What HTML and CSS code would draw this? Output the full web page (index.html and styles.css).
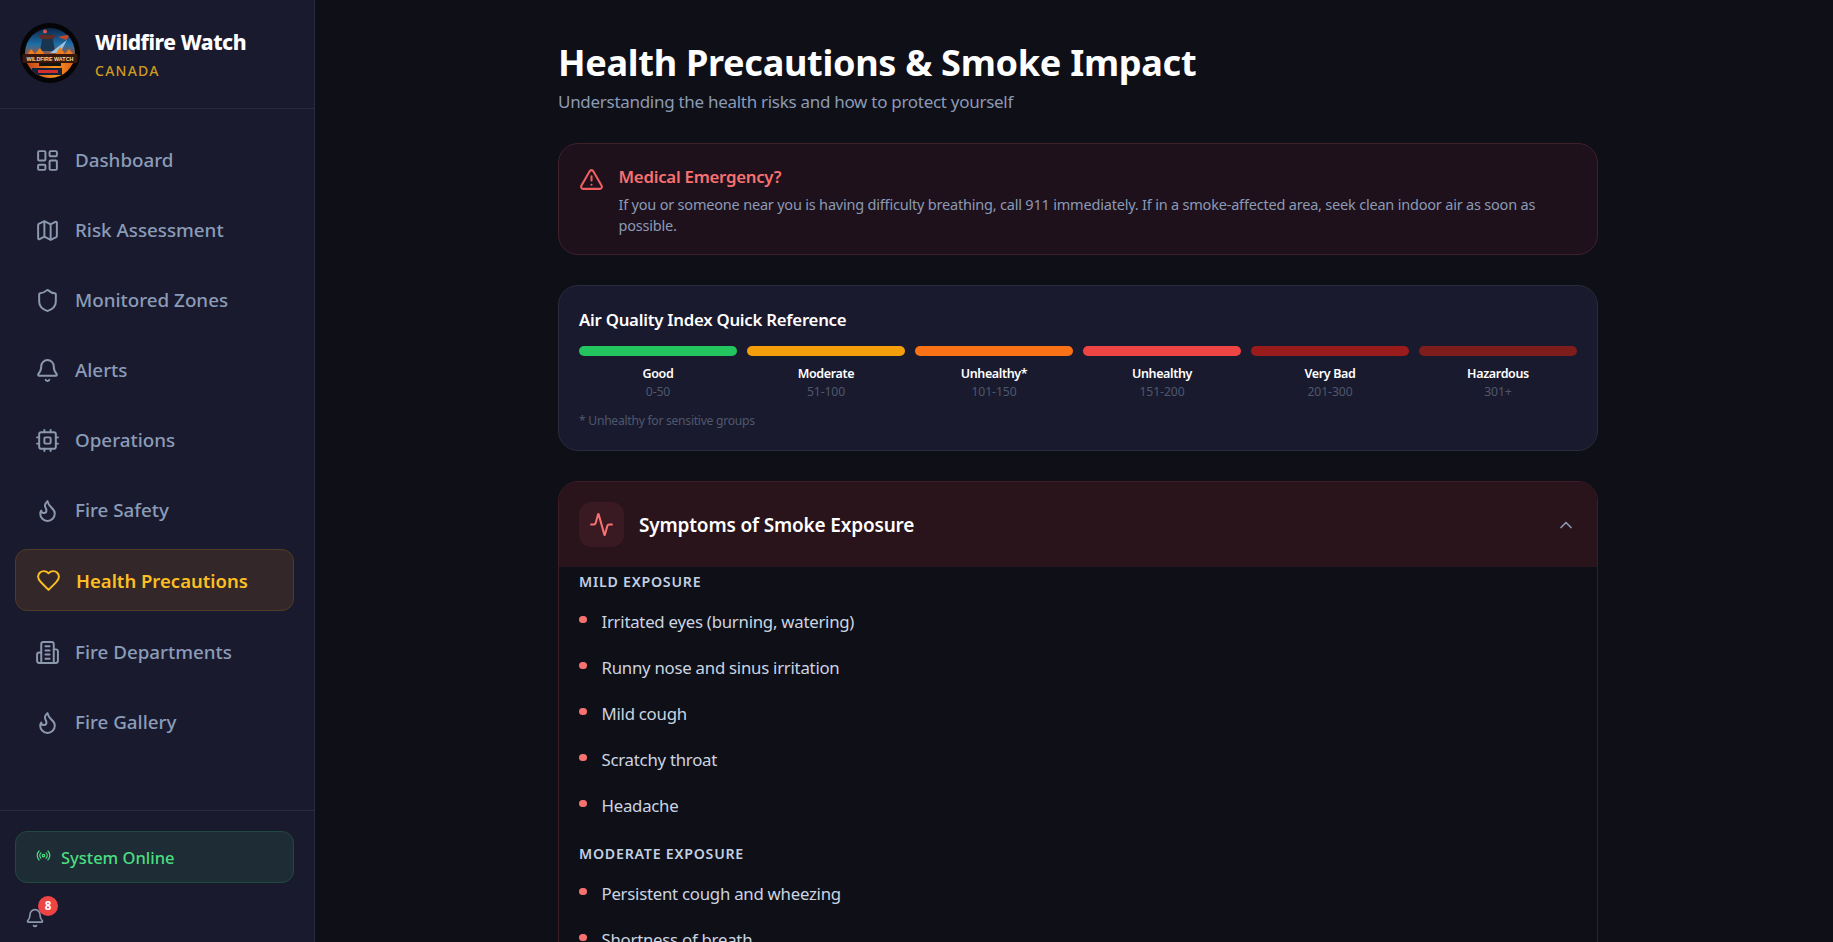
FILE: index.html
```html
<!DOCTYPE html>
<html lang="en">
<head>
<meta charset="utf-8">
<title>Wildfire Watch</title>
<link rel="stylesheet" href="styles.css">
</head>
<body>
<svg class="defs" width="0" height="0">
  <symbol id="i-flame" viewBox="0 0 24 24"><path d="M8.5 14.5A2.5 2.5 0 0 0 11 12c0-1.38-.5-2-1-3-1.072-2.143-.224-4.054 2-6 .5 2.5 2 4.9 4 6.5 2 1.6 3 3.5 3 5.5a7 7 0 1 1-14 0c0-1.153.433-2.294 1-3a2.5 2.5 0 0 0 2.5 2.5z"/></symbol>
  <symbol id="i-bell" viewBox="0 0 24 24"><path d="M10.268 21a2 2 0 0 0 3.464 0"/><path d="M3.262 15.326A1 1 0 0 0 4 17h16a1 1 0 0 0 .74-1.673C19.41 13.956 18 12.499 18 8A6 6 0 0 0 6 8c0 4.499-1.411 5.956-2.738 7.326"/></symbol>
</svg>
<div class="app">
  <aside class="sidebar">
    <div class="brand">
      <svg class="logo" viewBox="0 0 60 60">
        <defs>
          <linearGradient id="sky" x1="0" y1="0" x2="0" y2="1"><stop offset="0" stop-color="#0c2547"/><stop offset=".55" stop-color="#1f6ea8"/><stop offset="1" stop-color="#c9501c"/></linearGradient>
          <linearGradient id="fire" x1="0" y1="0" x2="1" y2="0"><stop offset="0" stop-color="#b8301a"/><stop offset=".6" stop-color="#f7941e"/><stop offset="1" stop-color="#d8481a"/></linearGradient>
          <clipPath id="disc"><circle cx="30" cy="30" r="25"/></clipPath>
        </defs>
        <circle cx="30" cy="30" r="30" fill="#050508"/>
        <g clip-path="url(#disc)">
          <rect x="0" y="5" width="60" height="30" fill="url(#sky)"/>
          <path d="M20 28l3-17h9l3 17z" fill="#1a3550"/>
          <path d="M18 12h18l-3 4H21z" fill="#5d2c26"/>
          <path d="M38 14l13-3-5 6z" fill="#c2482a"/>
          <path d="M30 30l17-13-7 13z" fill="#9cc3df"/>
          <path d="M6 34l5-8 4 5 5-6 5 7h10l5-8 5 7 4-5 6 8v8H6z" fill="#ef7d1c"/>
          <rect x="0" y="38" width="60" height="20" fill="url(#fire)"/>
          <rect x="12" y="45" width="30" height="7" fill="#12213c"/>
          <rect x="18" y="47" width="20" height="3" fill="#d12f2f"/>
        </g>
        <circle cx="25" cy="8.5" r="2" fill="#d9574a"/>
        <rect x="2.5" y="31" width="55" height="9" rx="1" fill="#3a170c"/>
        <text class="logo-text" x="30" y="37.8" text-anchor="middle">WILDFIRE WATCH</text>
        <rect x="19" y="40" width="22" height="3" fill="#14140c"/>
      </svg>
      <div class="brand-text">
        <div class="brand-name">Wildfire Watch</div>
        <div class="brand-sub">CANADA</div>
      </div>
    </div>
    <nav class="nav">
      <a class="nav-item"><svg class="icon" viewBox="0 0 24 24"><rect x="3" y="3" width="7" height="9" rx="1"/><rect x="14" y="3" width="7" height="5" rx="1"/><rect x="14" y="12" width="7" height="9" rx="1"/><rect x="3" y="16" width="7" height="5" rx="1"/></svg><span>Dashboard</span></a>
      <a class="nav-item"><svg class="icon" viewBox="0 0 24 24"><path d="M14.106 5.553a2 2 0 0 0 1.788 0l3.659-1.83A1 1 0 0 1 21 4.619v12.764a1 1 0 0 1-.553.894l-4.553 2.277a2 2 0 0 1-1.788 0l-4.212-2.106a2 2 0 0 0-1.788 0l-3.659 1.83A1 1 0 0 1 3 19.381V6.618a1 1 0 0 1 .553-.894l4.553-2.277a2 2 0 0 1 1.788 0z"/><path d="M15 5.764v15"/><path d="M9 3.236v15"/></svg><span>Risk Assessment</span></a>
      <a class="nav-item"><svg class="icon" viewBox="0 0 24 24"><path d="M20 13c0 5-3.5 7.5-7.66 8.95a1 1 0 0 1-.67-.01C7.5 20.5 4 18 4 13V6a1 1 0 0 1 1-1c2 0 4.5-1.2 6.24-2.72a1.17 1.17 0 0 1 1.52 0C14.51 3.81 17 5 19 5a1 1 0 0 1 1 1z"/></svg><span>Monitored Zones</span></a>
      <a class="nav-item"><svg class="icon"><use href="#i-bell"/></svg><span>Alerts</span></a>
      <a class="nav-item"><svg class="icon" viewBox="0 0 24 24"><rect x="4" y="4" width="16" height="16" rx="2"/><rect x="9" y="9" width="6" height="6" rx="1"/><path d="M15 2v2M15 20v2M2 15h2M2 9h2M20 15h2M20 9h2M9 2v2M9 20v2"/></svg><span>Operations</span></a>
      <a class="nav-item"><svg class="icon"><use href="#i-flame"/></svg><span>Fire Safety</span></a>
      <a class="nav-item active"><svg class="icon" viewBox="0 0 24 24"><path d="M19 14c1.49-1.46 3-3.21 3-5.5A5.5 5.5 0 0 0 16.5 3c-1.76 0-3 .5-4.5 2-1.5-1.5-2.74-2-4.5-2A5.5 5.5 0 0 0 2 8.5c0 2.3 1.5 4.05 3 5.5l7 7Z"/></svg><span>Health Precautions</span></a>
      <a class="nav-item"><svg class="icon" viewBox="0 0 24 24"><path d="M6 22V4a2 2 0 0 1 2-2h8a2 2 0 0 1 2 2v18Z"/><path d="M6 12H4a2 2 0 0 0-2 2v6a2 2 0 0 0 2 2h2"/><path d="M18 9h2a2 2 0 0 1 2 2v9a2 2 0 0 1-2 2h-2"/><path d="M10 6h4M10 10h4M10 14h4M10 18h4"/></svg><span>Fire Departments</span></a>
      <a class="nav-item"><svg class="icon"><use href="#i-flame"/></svg><span>Fire Gallery</span></a>
    </nav>
    <div class="side-foot">
      <div class="status"><svg class="icon-status" viewBox="0 0 24 24"><path d="M4.9 19.1C1 15.2 1 8.8 4.9 4.9"/><path d="M7.8 16.2c-2.3-2.3-2.3-6.1 0-8.5"/><circle cx="12" cy="12" r="2"/><path d="M16.2 7.8c2.3 2.3 2.3 6.1 0 8.5"/><path d="M19.1 4.9C23 8.8 23 15.1 19.1 19"/></svg><span>System Online</span></div>
      <div class="bell-wrap">
        <svg class="icon-bell"><use href="#i-bell"/></svg>
        <span class="badge">8</span>
      </div>
    </div>
  </aside>
  <main class="main">
    <div class="content">
      <h1 class="title">Health Precautions &amp; Smoke Impact</h1>
      <p class="subtitle">Understanding the health risks and how to protect yourself</p>

      <section class="emergency">
        <svg class="icon-alert" viewBox="0 0 24 24"><path d="m21.73 18-8-14a2 2 0 0 0-3.48 0l-8 14A2 2 0 0 0 4 21h16a2 2 0 0 0 1.73-3"/><path d="M12 9v4"/><path d="M12 17h.01"/></svg>
        <div>
          <h2 class="emergency-title">Medical Emergency?</h2>
          <p class="emergency-text">If you or someone near you is having difficulty breathing, call 911 immediately. If in a smoke-affected area, seek clean indoor air as soon as possible.</p>
        </div>
      </section>

      <section class="aqi">
        <h3 class="aqi-title">Air Quality Index Quick Reference</h3>
        <div class="aqi-grid">
          <div class="aqi-col"><div class="bar c1"></div><div class="aqi-name">Good</div><div class="aqi-range">0-50</div></div>
          <div class="aqi-col"><div class="bar c2"></div><div class="aqi-name">Moderate</div><div class="aqi-range">51-100</div></div>
          <div class="aqi-col"><div class="bar c3"></div><div class="aqi-name">Unhealthy*</div><div class="aqi-range">101-150</div></div>
          <div class="aqi-col"><div class="bar c4"></div><div class="aqi-name">Unhealthy</div><div class="aqi-range">151-200</div></div>
          <div class="aqi-col"><div class="bar c5"></div><div class="aqi-name">Very Bad</div><div class="aqi-range">201-300</div></div>
          <div class="aqi-col"><div class="bar c6"></div><div class="aqi-name">Hazardous</div><div class="aqi-range">301+</div></div>
        </div>
        <p class="aqi-note">* Unhealthy for sensitive groups</p>
      </section>

      <section class="panel">
        <header class="panel-head">
          <div class="panel-icon"><svg viewBox="0 0 24 24"><path d="M22 12h-2.48a2 2 0 0 0-1.93 1.46l-2.35 8.36a.25.25 0 0 1-.48 0L9.24 2.18a.25.25 0 0 0-.48 0l-2.35 8.36A2 2 0 0 1 4.49 12H2"/></svg></div>
          <h2 class="panel-title">Symptoms of Smoke Exposure</h2>
          <svg class="chev" viewBox="0 0 24 24"><path d="m18 15-6-6-6 6"/></svg>
        </header>
        <div class="panel-body">
          <h4 class="group">MILD EXPOSURE</h4>
          <ul class="list">
            <li>Irritated eyes (burning, watering)</li>
            <li>Runny nose and sinus irritation</li>
            <li>Mild cough</li>
            <li>Scratchy throat</li>
            <li>Headache</li>
          </ul>
          <h4 class="group">MODERATE EXPOSURE</h4>
          <ul class="list">
            <li>Persistent cough and wheezing</li>
            <li>Shortness of breath</li>
          </ul>
        </div>
      </section>
    </div>
  </main>
</div>
</body>
</html>
```
FILE: styles.css
```css
* { box-sizing: border-box; }
html, body { height: 100%; margin: 0; }
body {
  background: #0f0f17;
  color: #fff;
  font-family: "Noto Sans", "Open Sans", sans-serif;
  overflow: hidden;
}
h1, h2, h3, h4, p, ul { margin: 0; padding: 0; }
.defs { position: absolute; }
symbol { overflow: visible; }
svg { fill: none; stroke-linecap: round; stroke-linejoin: round; }
.app { display: flex; height: 942px; }

/* sidebar */
.sidebar {
  width: 315px;
  flex: none;
  display: flex;
  flex-direction: column;
  background: #1a1a2e;
  border-right: 1px solid #2a2a3c;
}
.brand {
  height: 109px;
  display: flex;
  align-items: center;
  gap: 15px;
  padding: 0 20px;
  border-bottom: 1px solid #2a2a3e;
}
.logo { width: 60px; height: 60px; flex: none; margin-bottom: 2px; }
.logo-text { font-size: 5.4px; font-weight: 800; fill: #f6dcae; font-family: "Liberation Sans", sans-serif; }
.brand-name { font-size: 21px; font-weight: 800; line-height: 28px; letter-spacing: -.45px; }
.brand-sub { font-size: 14px; font-weight: 500; line-height: 20px; color: #cf9a20; letter-spacing: 1.25px; margin-top: 5px; }
.nav { flex: 1; display: flex; flex-direction: column; gap: 10px; padding: 21px 20px 0 15px; }
.nav-item {
  height: 60px;
  display: flex;
  align-items: center;
  gap: 15px;
  padding: 0 20px;
  color: #8a9cb8;
  font-size: 18.8px;
  font-weight: 500;
  border-radius: 12px;
}
.icon { width: 25px; height: 25px; flex: none; stroke: #8b98ae; stroke-width: 1.9; }
.nav-item.active {
  height: 62px;
  margin: -1px 0 1px;
  padding: 1px 20px 0;
  color: #fbbf24;
  background: #332729;
  border: 1px solid #4f3c22;
  font-size: 18.5px;
  font-weight: 600;
}
.nav-item.active .icon { stroke: #fbbf24; }
.side-foot { height: 132px; padding: 20px 20px 0 15px; border-top: 1px solid #2a2a3e; }
.status {
  height: 52px;
  display: flex;
  align-items: center;
  gap: 10px;
  padding: 0 20px;
  color: #4ade80;
  font-size: 16.5px;
  font-weight: 500;
  background: #1e2c36;
  border: 1px solid #1f4a3f;
  border-radius: 12px;
}
.icon-status { width: 15px; height: 15px; stroke: #4ade80; stroke-width: 2; margin-bottom: 4px; }
.bell-wrap { position: relative; width: 40px; height: 40px; margin: 13px 0 0 5px; }
.icon-bell { width: 20px; height: 20px; stroke: #8b98ae; stroke-width: 2; position: absolute; left: 5px; top: 12px; }
.badge {
  position: absolute;
  left: 18px;
  top: 0;
  width: 20px;
  height: 20px;
  border-radius: 50%;
  background: #ef4444;
  color: #fff;
  font-size: 11.5px;
  font-weight: 700;
  line-height: 20px;
  text-align: center;
}

/* main */
.main { flex: 1; overflow: hidden; }
.content { width: 1040px; margin-left: 243px; padding-top: 37px; }
.title { font-size: 36.1px; font-weight: 700; line-height: 50px; letter-spacing: -.3px; }
.subtitle { font-size: 17px; line-height: 28px; color: #8b9ab5; margin-top: 1px; letter-spacing: -.29px; }

.emergency {
  height: 112px;
  margin-top: 27px;
  display: flex;
  gap: 14.5px;
  padding: 19px 20px 0;
  background: #1e111c;
  border: 1px solid #41202c;
  border-radius: 20px;
}
.icon-alert { width: 25px; height: 25px; flex: none; stroke: #f05f5f; stroke-width: 2; margin-top: 4px; }
.emergency-title { font-size: 16.8px; font-weight: 600; line-height: 28px; color: #f87171; letter-spacing: -.25px; }
.emergency-text { font-size: 14.5px; line-height: 21px; color: #8b9ab5; margin-top: 3px; letter-spacing: -.2px; }

.aqi {
  height: 166px;
  margin-top: 30px;
  padding: 20px;
  background: #1a1a2e;
  border: 1px solid #2a2a3e;
  border-radius: 20px;
}
.aqi-title { font-size: 16.8px; font-weight: 600; line-height: 28px; letter-spacing: -.25px; }
.aqi-grid { display: grid; grid-template-columns: repeat(6, 1fr); gap: 10px; margin-top: 12px; }
.aqi-col { text-align: center; }
.bar { height: 10px; border-radius: 5px; }
.c1 { background: #22c55e; }
.c2 { background: #f59e0b; }
.c3 { background: #f97316; }
.c4 { background: #ef4444; }
.c5 { background: #991b1b; }
.c6 { background: #7f1d1d; }
.aqi-name { font-size: 12.5px; font-weight: 600; line-height: 19px; margin-top: 8px; letter-spacing: -.35px; }
.aqi-range { font-size: 12.2px; line-height: 18px; color: #4d586d; letter-spacing: -.1px; }
.aqi-note { font-size: 12.2px; line-height: 18px; color: #4d586d; margin-top: 11px; letter-spacing: -.3px; }

.panel {
  margin-top: 30px;
  border: 1px solid #401c26;
  border-radius: 20px;
  overflow: hidden;
}
.panel-head {
  height: 85px;
  display: flex;
  align-items: center;
  gap: 15px;
  padding: 0 20px;
  background: #29141c;
}
.panel-icon {
  width: 45px;
  height: 45px;
  display: flex;
  align-items: center;
  justify-content: center;
  background: #3a1a22;
  border-radius: 12.5px;
}
.panel-icon svg { width: 25px; height: 25px; stroke: #f87171; stroke-width: 2; }
.panel-title { flex: 1; font-size: 19px; font-weight: 600; line-height: 28px; letter-spacing: -.17px; }
.chev { width: 20px; height: 20px; stroke: #8b9ab5; stroke-width: 2; margin-right: 1px; }
.panel-body { padding: 4px 20px 0; }
.group { font-size: 14.2px; font-weight: 600; line-height: 22px; color: #c1d0e4; letter-spacing: .75px; }
.list { list-style: none; padding: 5px 0 15px; }
.list li {
  height: 46px;
  display: flex;
  align-items: center;
  gap: 15px;
  font-size: 16.8px;
  letter-spacing: -.25px;
  color: #cbd5e1;
}
.list li::before {
  content: "";
  width: 7.5px;
  height: 7.5px;
  flex: none;
  margin-bottom: 3px;
  border-radius: 50%;
  background: #f87171;
}
```
